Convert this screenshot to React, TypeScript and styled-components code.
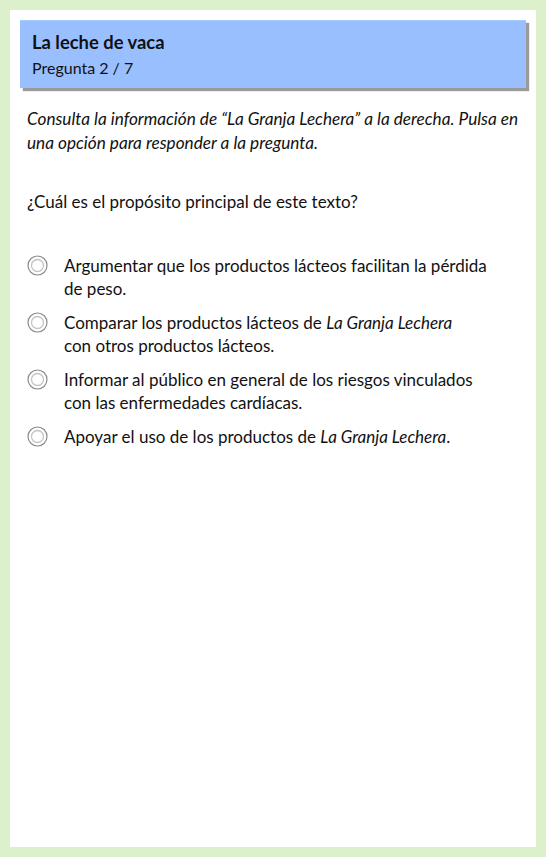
import React from "react";
import styled, { createGlobalStyle } from "styled-components";

const Global = createGlobalStyle`
  html, body { margin: 0; padding: 0; }
  body {
    background: #ddf0cc;
    font-family: Lato, "Open Sans", sans-serif;
    color: #111;
  }
`;

const Panel = styled.div`
  margin: 10px;
  height: 837px;
  background: #ffffff;
  padding: 10px;
  box-sizing: border-box;
`;

const Header = styled.header`
  background: #99bfff;
  border-top: 1px solid #a9c9ff;
  box-shadow: 3px 3px 1px #9a9a9a;
  height: 68px;
  box-sizing: border-box;
  padding: 10px 12px;
  display: flex;
  flex-direction: column;
  justify-content: center;
  gap: 4px;
`;

const Title = styled.div`
  font-weight: 700;
  font-size: 18.4px;
  line-height: 22px;
`;

const Sub = styled.div`
  font-size: 16px;
  line-height: 22px;
`;

const Content = styled.div`
  padding: 19px 4px 0 7px;
`;

const Instructions = styled.p`
  margin: 0;
  font-style: italic;
  font-size: 17.2px;
  line-height: 24px;
  white-space: nowrap;
`;

const Question = styled.p`
  margin: 35px 0 0 0;
  font-size: 17px;
  line-height: 24px;
`;

const Options = styled.ul`
  list-style: none;
  margin: 40px 0 0 0;
  padding: 0;
  display: flex;
  flex-direction: column;
  gap: 11px;
`;

const Option = styled.li`
  display: flex;
  align-items: flex-start;
  gap: 16px;
  cursor: pointer;
`;

const RadioWrap = styled.span`
  flex: none;
  width: 21px;
  height: 21px;
  margin-top: 1px;
  display: flex;
`;

const OptionText = styled.span`
  font-size: 17px;
  line-height: 23px;
  white-space: nowrap;
`;

const Radio = () => (
  <RadioWrap>
    <svg width="21" height="21" viewBox="0 0 21 21">
      <circle cx="10.5" cy="10.5" r="9.5" fill="#fff" stroke="#8c8c8c" strokeWidth="1.2" />
      <circle cx="10.5" cy="10.5" r="6" fill="#fff" stroke="#c4c4c4" strokeWidth="1.3" />
    </svg>
  </RadioWrap>
);

export default function App() {
  return (
    <>
      <Global />
      <Panel>
        <Header>
          <Title>La leche de vaca</Title>
          <Sub>Pregunta 2 / 7</Sub>
        </Header>
        <Content>
          <Instructions>
            Consulta la información de “La Granja Lechera” a la derecha. Pulsa en
            <br />
            una opción para responder a la pregunta.
          </Instructions>
          <Question>¿Cuál es el propósito principal de este texto?</Question>
          <Options>
            <Option>
              <Radio />
              <OptionText>
                Argumentar que los productos lácteos facilitan la pérdida
                <br />
                de peso.
              </OptionText>
            </Option>
            <Option>
              <Radio />
              <OptionText>
                Comparar los productos lácteos de <em>La Granja Lechera</em>
                <br />
                con otros productos lácteos.
              </OptionText>
            </Option>
            <Option>
              <Radio />
              <OptionText>
                Informar al público en general de los riesgos vinculados
                <br />
                con las enfermedades cardíacas.
              </OptionText>
            </Option>
            <Option>
              <Radio />
              <OptionText>
                Apoyar el uso de los productos de <em>La Granja Lechera</em>.
              </OptionText>
            </Option>
          </Options>
        </Content>
      </Panel>
    </>
  );
}
